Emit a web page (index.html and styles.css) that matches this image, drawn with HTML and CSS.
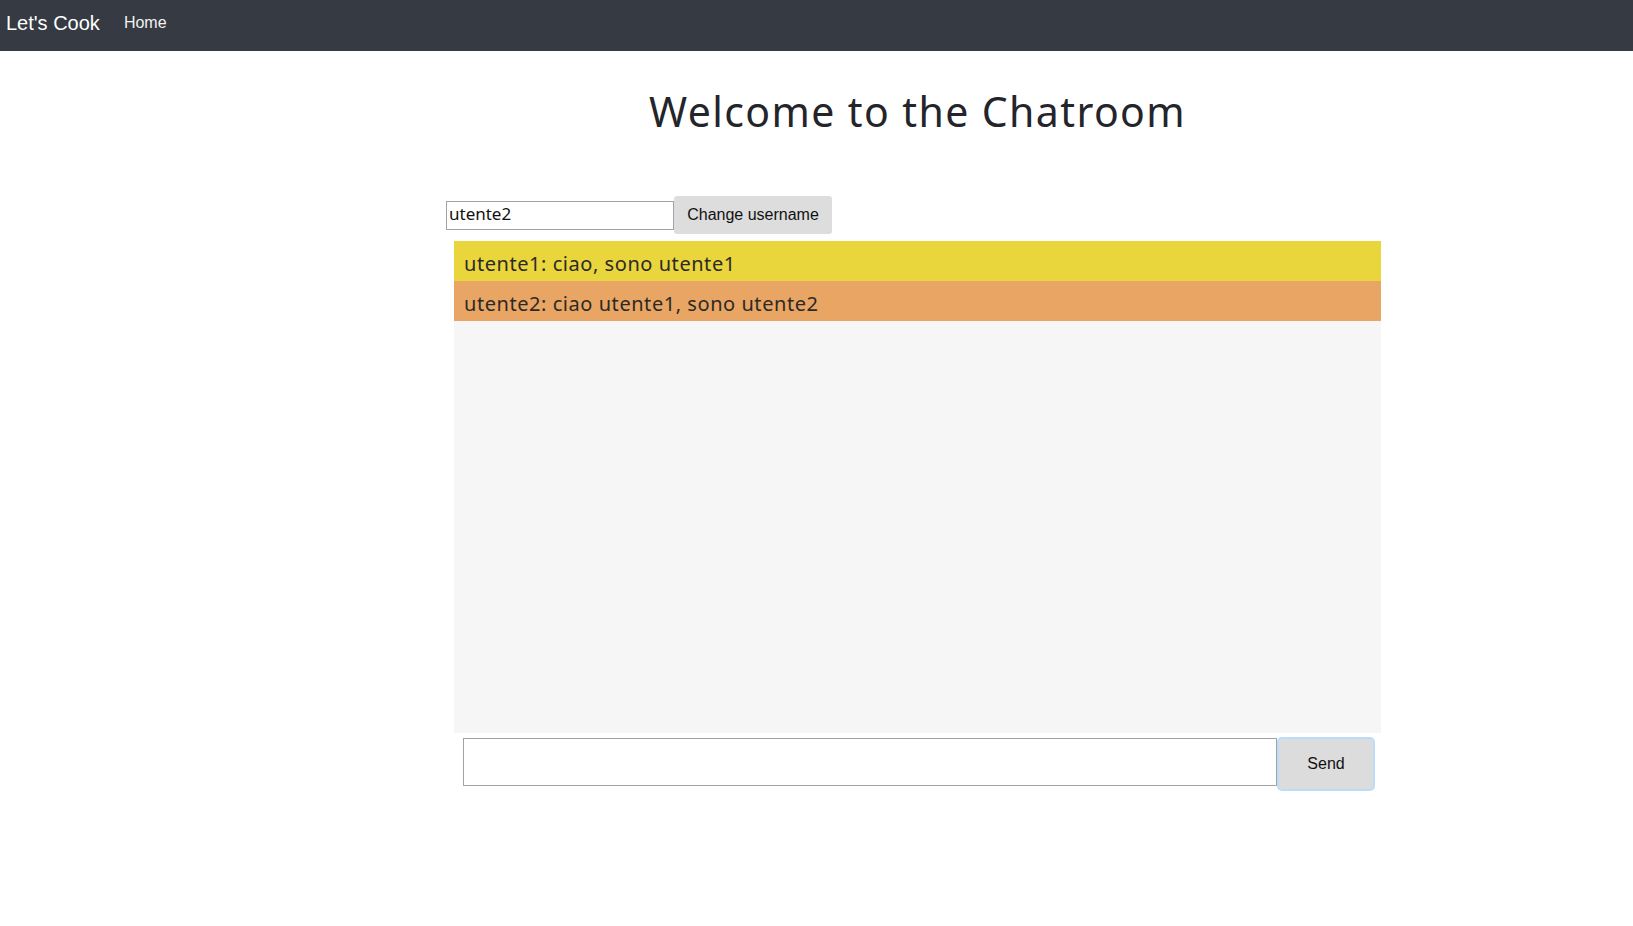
FILE: index.html
```html
<!DOCTYPE html>
<html lang="it">
<head>
<meta charset="utf-8">
<title>Let's Cook - Chatroom</title>
<link rel="stylesheet" href="styles.css">
</head>
<body>
<nav class="navbar">
  <a class="brand" href="#">Let's Cook</a>
  <a class="nav-link" href="#">Home</a>
</nav>
<main class="main">
  <div class="chat-wrap">
    <h1 class="title">Welcome to the Chatroom</h1>
    <div class="user-row">
      <input class="username" type="text" value="utente2">
      <button class="btn-change">Change username</button>
    </div>
    <div class="chat-box">
      <div class="msg msg-yellow">utente1: ciao, sono utente1</div>
      <div class="msg msg-orange">utente2: ciao utente1, sono utente2</div>
    </div>
    <div class="send-row">
      <input class="message" type="text">
      <button class="btn-send">Send</button>
    </div>
  </div>
</main>
</body>
</html>
```
FILE: styles.css
```css
html, body {
  margin: 0;
  padding: 0;
  background: #ffffff;
}
body {
  font-family: "Noto Sans", "DejaVu Sans", sans-serif;
  color: #222429;
}
.navbar {
  height: 51px;
  background: #363a43;
  display: flex;
  align-items: center;
  padding: 0 6px 5px 6px;
  box-sizing: border-box;
}
.brand {
  font-family: "Liberation Sans", Arial, sans-serif;
  font-size: 20px;
  color: #ffffff;
  text-decoration: none;
  margin-right: 24px;
}
.nav-link {
  font-family: "Liberation Sans", Arial, sans-serif;
  font-size: 16px;
  color: #f2f2f2;
  text-decoration: none;
  padding-bottom: 1px;
}
.main {
  padding-left: 446px;
}
.chat-wrap {
  width: 943px;
}
.title {
  margin: 0;
  padding-top: 32px;
  height: 112px;
  box-sizing: border-box;
  text-align: center;
  font-weight: 400;
  font-size: 41px;
  line-height: 56px;
  letter-spacing: 1.4px;
  color: #23252b;
}
.user-row {
  display: flex;
  align-items: center;
  height: 38px;
  margin-top: 33px;
}
.username {
  width: 228px;
  height: 29px;
  box-sizing: border-box;
  border: 1px solid #a3a3a3;
  padding: 0 2px 3px 2px;
  margin: 0;
  font-family: "Noto Sans", sans-serif;
  font-size: 17px;
  color: #111;
  outline: none;
}
.btn-change {
  height: 38px;
  width: 158px;
  border: none;
  border-radius: 3px;
  background: #dddddd;
  font-family: "Liberation Sans", Arial, sans-serif;
  font-size: 16px;
  color: #111;
  margin: 0;
  padding: 0;
}
.chat-box {
  margin: 7px 8px 0 8px;
  height: 492px;
  background: #f6f6f6;
}
.msg {
  height: 40px;
  line-height: 40px;
  padding-left: 10px;
  padding-top: 3px;
  box-sizing: border-box;
  font-size: 20px;
  color: #2c2a26;
  letter-spacing: 0.55px;
}
.msg-yellow {
  background: #e9d53c;
}
.msg-orange {
  background: #e9a563;
}
.send-row {
  display: flex;
  align-items: center;
  margin: 4px 14px 0 17px;
  height: 54px;
}
.message {
  flex: 1;
  height: 48px;
  box-sizing: border-box;
  border: 1px solid #a3a3a3;
  margin: 0 0 4px 0;
  outline: none;
}
.btn-send {
  width: 98px;
  height: 54px;
  box-sizing: border-box;
  border: 2px solid #bcdcfc;
  border-radius: 5px;
  background: #dcdcdc;
  font-family: "Liberation Sans", Arial, sans-serif;
  font-size: 16px;
  color: #111;
  margin: 0;
  padding: 0;
}
```
